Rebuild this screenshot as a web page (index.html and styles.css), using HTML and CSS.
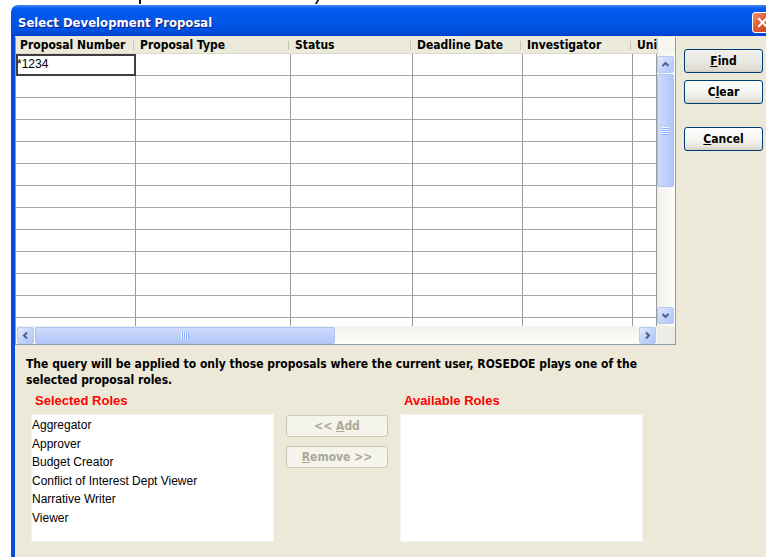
FILE: index.html
```html
<!DOCTYPE html>
<html lang="en">
<head>
<meta charset="utf-8">
<title>Select Development Proposal</title>
<link rel="stylesheet" href="styles.css">
</head>
<body>
<div class="desk"><span class="desk-stroke"></span><span class="desk-slash"></span></div>
<div class="window">
  <div class="titlebar">
    <span class="title">Select Development Proposal</span>
    <span class="close"><svg viewBox="0 0 12 12"><path d="M2 2 L10 10 M10 2 L2 10" stroke="#fff" stroke-width="2.2" stroke-linecap="round" fill="none"/></svg></span>
  </div>
  <div class="frame">
    <div class="main">
      <div class="grid">
        <div class="thead">
          <div class="hcell">Proposal Number</div>
          <div class="hcell">Proposal Type</div>
          <div class="hcell">Status</div>
          <div class="hcell">Deadline Date</div>
          <div class="hcell">Investigator</div>
          <div class="hcell">Uni</div>
        </div>
        <div class="thead-end"></div>
        <div class="tbody">
          <div class="row"><div class="cell focus">*1234</div><div class="cell"></div><div class="cell"></div><div class="cell"></div><div class="cell"></div><div class="cell"></div></div>
          <div class="row"><div class="cell"></div><div class="cell"></div><div class="cell"></div><div class="cell"></div><div class="cell"></div><div class="cell"></div></div>
          <div class="row"><div class="cell"></div><div class="cell"></div><div class="cell"></div><div class="cell"></div><div class="cell"></div><div class="cell"></div></div>
          <div class="row"><div class="cell"></div><div class="cell"></div><div class="cell"></div><div class="cell"></div><div class="cell"></div><div class="cell"></div></div>
          <div class="row"><div class="cell"></div><div class="cell"></div><div class="cell"></div><div class="cell"></div><div class="cell"></div><div class="cell"></div></div>
          <div class="row"><div class="cell"></div><div class="cell"></div><div class="cell"></div><div class="cell"></div><div class="cell"></div><div class="cell"></div></div>
          <div class="row"><div class="cell"></div><div class="cell"></div><div class="cell"></div><div class="cell"></div><div class="cell"></div><div class="cell"></div></div>
          <div class="row"><div class="cell"></div><div class="cell"></div><div class="cell"></div><div class="cell"></div><div class="cell"></div><div class="cell"></div></div>
          <div class="row"><div class="cell"></div><div class="cell"></div><div class="cell"></div><div class="cell"></div><div class="cell"></div><div class="cell"></div></div>
          <div class="row"><div class="cell"></div><div class="cell"></div><div class="cell"></div><div class="cell"></div><div class="cell"></div><div class="cell"></div></div>
          <div class="row"><div class="cell"></div><div class="cell"></div><div class="cell"></div><div class="cell"></div><div class="cell"></div><div class="cell"></div></div>
          <div class="row"><div class="cell"></div><div class="cell"></div><div class="cell"></div><div class="cell"></div><div class="cell"></div><div class="cell"></div></div>
          <div class="row"><div class="cell"></div><div class="cell"></div><div class="cell"></div><div class="cell"></div><div class="cell"></div><div class="cell"></div></div>
        </div>
        <div class="vscroll">
          <span class="sbtn"><svg viewBox="0 0 9 9"><path d="M1.5 6 L4.5 3 L7.5 6" stroke="#4D6185" stroke-width="2" fill="none"/></svg></span>
          <span class="thumb thumb-v"><span class="grip-v"></span></span>
          <span class="track"></span>
          <span class="sbtn"><svg viewBox="0 0 9 9"><path d="M1.5 3 L4.5 6 L7.5 3" stroke="#4D6185" stroke-width="2" fill="none"/></svg></span>
        </div>
        <div class="hscroll">
          <span class="sbtn"><svg viewBox="0 0 9 9"><path d="M6 1.5 L3 4.5 L6 7.5" stroke="#4D6185" stroke-width="2" fill="none"/></svg></span>
          <span class="thumb thumb-h"><span class="grip-h"></span></span>
          <span class="track"></span>
          <span class="sbtn"><svg viewBox="0 0 9 9"><path d="M3 1.5 L6 4.5 L3 7.5" stroke="#4D6185" stroke-width="2" fill="none"/></svg></span>
        </div>
        <div class="corner"></div>
      </div>
      <div class="actions">
        <button class="btn btn-default" type="button"><u>F</u>ind</button>
        <button class="btn" type="button">C<u>l</u>ear</button>
        <button class="btn btn-cancel" type="button"><u>C</u>ancel</button>
      </div>
    </div>
    <p class="note">The query will be applied to only those proposals where the current user, ROSEDOE plays one of the<br>selected proposal roles.</p>
    <div class="roles">
      <div class="roles-label">Selected Roles</div>
      <div></div>
      <div class="roles-label">Available Roles</div>
      <ul class="listbox">
        <li>Aggregator</li>
        <li>Approver</li>
        <li>Budget Creator</li>
        <li>Conflict of Interest Dept Viewer</li>
        <li>Narrative Writer</li>
        <li>Viewer</li>
      </ul>
      <div class="move">
        <button class="btn btn-disabled" type="button">&lt;&lt; <u>A</u>dd</button>
        <button class="btn btn-disabled" type="button"><u>R</u>emove &gt;&gt;</button>
      </div>
      <ul class="listbox"></ul>
    </div>
  </div>
</div>
</body>
</html>
```

FILE: styles.css
```css
html, body {
  margin: 0;
  height: 100%;
  overflow: hidden;
}

body {
  background: #fff;
  font-family: "DejaVu Sans Condensed", "DejaVu Sans", sans-serif;
  color: #000;
}

/* the desktop strip above the dialog */
.desk {
  height: 5px;
  display: flex;
  align-items: flex-start;
}
.desk-stroke {
  width: 2px;
  height: 4px;
  margin-left: 139px;
  background: #111;
}
.desk-slash {
  width: 2px;
  height: 4px;
  margin-left: 175px;
  background: #111;
  transform: skewX(-30deg);
}

/* dialog window */
.window {
  margin-left: 11px;
  width: 767px;
}

.titlebar {
  height: 31px;
  box-sizing: border-box;
  padding-left: 7px;
  padding-top: 3px;
  border-radius: 7px 7px 0 0;
  background: linear-gradient(180deg, #3D8DF5 0%, #0A5EEC 10%, #0058EE 25%, #0055E5 60%, #0050DD 85%, #003FCF 100%);
  display: flex;
  align-items: center;
  justify-content: space-between;
}

.title {
  color: #fff;
  font-weight: bold;
  font-size: 13px;
  text-shadow: 1px 1px 0 #0A1D86;
}

.close {
  width: 21px;
  height: 21px;
  margin-right: 5px;
  box-sizing: border-box;
  border: 1px solid #fff;
  border-radius: 3px;
  background: linear-gradient(135deg, #F09372 0%, #E25B33 45%, #C9411C 100%);
  display: flex;
  align-items: center;
  justify-content: center;
}
.close svg {
  width: 11px;
  height: 11px;
}

.frame {
  height: 521px;
  box-sizing: border-box;
  padding-top: 1px;
  background: #ECE9D8;
  border-left: 4px solid #0A4BDD;
}

.main {
  display: flex;
  align-items: flex-start;
}

/* result table with its scroll bars */
.grid {
  display: grid;
  grid-template-columns: 641px 18px;
  grid-template-rows: 17px 272px 18px;
  border: 1px solid #8E9CB3;
  border-top: 0;
  background: #fff;
}

.thead,
.row {
  display: grid;
  grid-template-columns: 120px 155px 122px 110px 110px 24px;
}

.thead {
  background: #EBEADB;
  box-shadow: inset 0 -1px 0 #DEDACB;
}

.hcell {
  padding-left: 4px;
  font-weight: bold;
  font-size: 12px;
  line-height: 17px;
  white-space: nowrap;
  overflow: hidden;
  background: linear-gradient(#C7C3B3, #C7C3B3) no-repeat right 2px center / 1px 9px;
}
.hcell:last-child {
  background: none;
}

.thead-end {
  background: #F6F5F0;
  border-left: 1px solid #D6D2C2;
}

.tbody {
  overflow: hidden;
}

.row {
  height: 22px;
}

.cell {
  box-sizing: border-box;
  border-right: 1px solid #999;
  border-bottom: 1px solid #A6A6A6;
  padding-left: 1px;
  font-family: "Liberation Sans", Arial, sans-serif;
  font-size: 12px;
  line-height: 21px;
}

.cell.focus {
  outline: 2px solid #3E3E3E;
  outline-offset: -2px;
}

.vscroll {
  display: flex;
  flex-direction: column;
  padding: 2px 1px 2px 0;
  background: linear-gradient(90deg, #F2F0EA, #FEFEFB);
}

.hscroll {
  display: flex;
  padding: 1px 1px 0 1px;
  background: linear-gradient(180deg, #F2F0EA, #FEFEFB);
}

.track {
  flex: 1;
}

.sbtn {
  width: 17px;
  height: 17px;
  flex: none;
  box-sizing: border-box;
  border: 1px solid #B7CAF3;
  border-radius: 2px;
  background: linear-gradient(135deg, #E2EAFE 0%, #C3D4FB 50%, #AFC5F6 100%);
  display: flex;
  align-items: center;
  justify-content: center;
}
.sbtn svg {
  width: 9px;
  height: 9px;
}

.thumb {
  flex: none;
  box-sizing: border-box;
  border: 1px solid #AEC3F3;
  border-radius: 2px;
  display: flex;
  align-items: center;
  justify-content: center;
}

.thumb-v {
  width: 17px;
  height: 113px;
  margin-top: 1px;
  background: linear-gradient(90deg, #CDDAFD, #BCCEFA 60%, #B2C8F8);
}

.thumb-h {
  width: 300px;
  height: 17px;
  margin-left: 1px;
  background: linear-gradient(180deg, #CDDAFD, #BCCEFA 60%, #B2C8F8);
}

.grip-v {
  width: 7px;
  height: 8px;
  background: repeating-linear-gradient(180deg, #EEF4FE 0 1px, #8CB0F8 1px 2px);
}

.grip-h {
  width: 8px;
  height: 7px;
  background: repeating-linear-gradient(90deg, #EEF4FE 0 1px, #8CB0F8 1px 2px);
}

.corner {
  background: #EEEDE5;
}

/* command buttons */
.actions {
  display: flex;
  flex-direction: column;
  margin-left: 8px;
  margin-top: 12px;
}

.btn {
  display: block;
  width: 79px;
  height: 24px;
  box-sizing: border-box;
  padding: 0;
  margin: 0;
  border: 1px solid #003C74;
  border-radius: 3px;
  background: linear-gradient(180deg, #FFFFFF 0%, #F5F4EF 55%, #E6E3D8 85%, #D6D0C5 100%);
  font-family: "DejaVu Sans Condensed", "DejaVu Sans", sans-serif;
  font-weight: bold;
  font-size: 12px;
  line-height: 22px;
  text-align: center;
  white-space: pre;
  color: #000;
}

.btn + .btn {
  margin-top: 7px;
}

.btn-default {
  background: linear-gradient(180deg, #F2F1EC 0%, #E8E7E0 55%, #DEDBD0 90%, #D2CDC1 100%);
}

.btn.btn-cancel {
  margin-top: 23px;
}

.btn-disabled {
  width: 102px;
  height: 22px;
  line-height: 20px;
  border-color: #C9C7BA;
  background: #F5F4EA;
  color: #ACA899;
}

.btn-disabled + .btn-disabled {
  margin-top: 9px;
}

/* role selection */
.note {
  margin: 11px 0 0 11px;
  font-weight: bold;
  font-size: 12px;
  line-height: 16px;
}

.roles {
  display: grid;
  grid-template-columns: 243px 102px 243px;
  column-gap: 12px;
  margin: 5px 0 0 16px;
}

.roles-label {
  padding-left: 4px;
  margin-bottom: 6px;
  font-family: "Liberation Sans", Arial, sans-serif;
  font-weight: bold;
  font-size: 13px;
  line-height: 15px;
  color: #FF0000;
}

.listbox {
  list-style: none;
  margin: 0;
  padding: 1px 0 0 0;
  height: 128px;
  box-sizing: border-box;
  background: #fff;
  border: 1px solid #F4F3EE;
  font-family: "Liberation Sans", Arial, sans-serif;
  font-size: 12px;
  line-height: 18.6px;
}

.move {
  display: flex;
  flex-direction: column;
  padding-top: 1px;
}
```
